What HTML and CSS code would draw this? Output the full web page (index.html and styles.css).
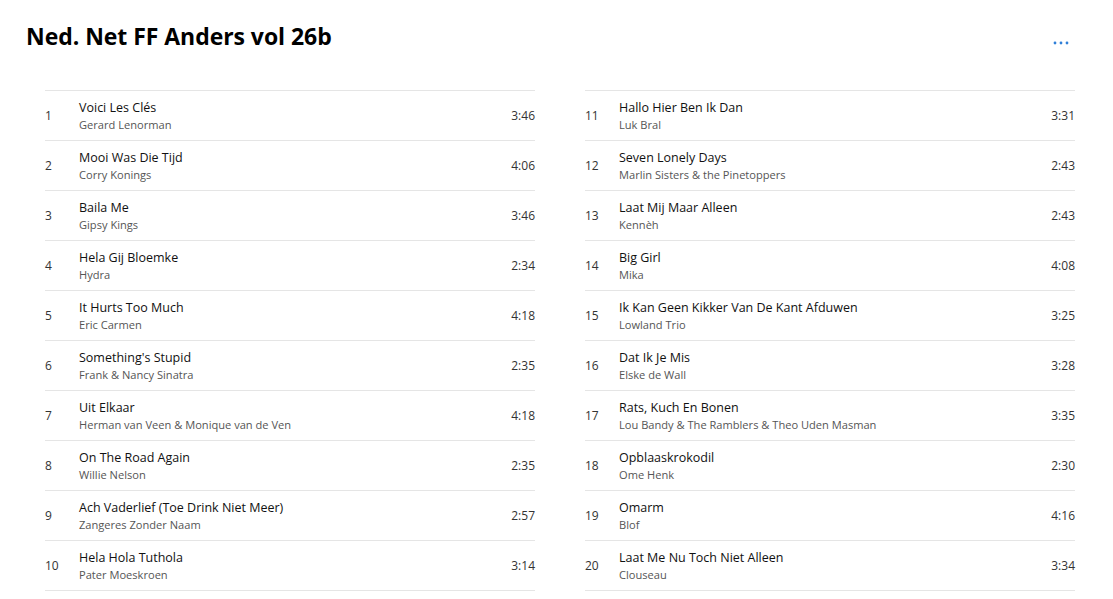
FILE: index.html
```html
<!DOCTYPE html>
<html>
<head>
<meta charset="utf-8">
<link rel="stylesheet" href="styles.css">
</head>
<body>
<div class="page">
  <header class="header">
    <h1 class="title">Ned. Net FF Anders vol 26b</h1>
    <button class="more" aria-label="More">
      <svg width="16" height="4" viewBox="0 0 16 4"><circle cx="2" cy="2" r="1.4" fill="#2f7fd8"/><circle cx="8" cy="2" r="1.4" fill="#2f7fd8"/><circle cx="14" cy="2" r="1.4" fill="#2f7fd8"/></svg>
    </button>
  </header>
  <div class="columns">
    <ol class="tracks">
      <li class="track"><span class="num">1</span><div class="info"><div class="name">Voici Les Clés</div><div class="artist">Gerard Lenorman</div></div><span class="dur">3:46</span></li>
      <li class="track"><span class="num">2</span><div class="info"><div class="name">Mooi Was Die Tijd</div><div class="artist">Corry Konings</div></div><span class="dur">4:06</span></li>
      <li class="track"><span class="num">3</span><div class="info"><div class="name">Baila Me</div><div class="artist">Gipsy Kings</div></div><span class="dur">3:46</span></li>
      <li class="track"><span class="num">4</span><div class="info"><div class="name">Hela Gij Bloemke</div><div class="artist">Hydra</div></div><span class="dur">2:34</span></li>
      <li class="track"><span class="num">5</span><div class="info"><div class="name">It Hurts Too Much</div><div class="artist">Eric Carmen</div></div><span class="dur">4:18</span></li>
      <li class="track"><span class="num">6</span><div class="info"><div class="name">Something's Stupid</div><div class="artist">Frank &amp; Nancy Sinatra</div></div><span class="dur">2:35</span></li>
      <li class="track"><span class="num">7</span><div class="info"><div class="name">Uit Elkaar</div><div class="artist">Herman van Veen &amp; Monique van de Ven</div></div><span class="dur">4:18</span></li>
      <li class="track"><span class="num">8</span><div class="info"><div class="name">On The Road Again</div><div class="artist">Willie Nelson</div></div><span class="dur">2:35</span></li>
      <li class="track"><span class="num">9</span><div class="info"><div class="name">Ach Vaderlief (Toe Drink Niet Meer)</div><div class="artist">Zangeres Zonder Naam</div></div><span class="dur">2:57</span></li>
      <li class="track"><span class="num">10</span><div class="info"><div class="name">Hela Hola Tuthola</div><div class="artist">Pater Moeskroen</div></div><span class="dur">3:14</span></li>
    </ol>
    <ol class="tracks">
      <li class="track"><span class="num">11</span><div class="info"><div class="name">Hallo Hier Ben Ik Dan</div><div class="artist">Luk Bral</div></div><span class="dur">3:31</span></li>
      <li class="track"><span class="num">12</span><div class="info"><div class="name">Seven Lonely Days</div><div class="artist">Marlin Sisters &amp; the Pinetoppers</div></div><span class="dur">2:43</span></li>
      <li class="track"><span class="num">13</span><div class="info"><div class="name">Laat Mij Maar Alleen</div><div class="artist">Kennèh</div></div><span class="dur">2:43</span></li>
      <li class="track"><span class="num">14</span><div class="info"><div class="name">Big Girl</div><div class="artist">Mika</div></div><span class="dur">4:08</span></li>
      <li class="track"><span class="num">15</span><div class="info"><div class="name">Ik Kan Geen Kikker Van De Kant Afduwen</div><div class="artist">Lowland Trio</div></div><span class="dur">3:25</span></li>
      <li class="track"><span class="num">16</span><div class="info"><div class="name">Dat Ik Je Mis</div><div class="artist">Elske de Wall</div></div><span class="dur">3:28</span></li>
      <li class="track"><span class="num">17</span><div class="info"><div class="name">Rats, Kuch En Bonen</div><div class="artist">Lou Bandy &amp; The Ramblers &amp; Theo Uden Masman</div></div><span class="dur">3:35</span></li>
      <li class="track"><span class="num">18</span><div class="info"><div class="name">Opblaaskrokodil</div><div class="artist">Ome Henk</div></div><span class="dur">2:30</span></li>
      <li class="track"><span class="num">19</span><div class="info"><div class="name">Omarm</div><div class="artist">Blof</div></div><span class="dur">4:16</span></li>
      <li class="track"><span class="num">20</span><div class="info"><div class="name">Laat Me Nu Toch Niet Alleen</div><div class="artist">Clouseau</div></div><span class="dur">3:34</span></li>
    </ol>
  </div>
</div>
</body>
</html>
```

FILE: styles.css
```css
html, body {
  margin: 0;
  padding: 0;
  background: #ffffff;
}
body {
  font-family: "Open Sans", "Noto Sans", sans-serif;
  color: #1a1a1a;
}
.page {
  width: 1113px;
  height: 599px;
  overflow: hidden;
}
.header {
  display: flex;
  justify-content: space-between;
  align-items: flex-start;
  padding: 21px 44px 0 26px;
  height: 90px;
  box-sizing: border-box;
}
.title {
  margin: 0;
  font-size: 23px;
  font-weight: 700;
  line-height: 30px;
  color: #000;
  letter-spacing: -0.05px;
}
.more {
  border: 0;
  background: none;
  padding: 0;
  margin-top: 20px;
  width: 16px;
  height: 4px;
  display: flex;
}
.columns {
  display: grid;
  grid-template-columns: 490px 490px;
  column-gap: 50px;
  padding-left: 45px;
}
.tracks {
  list-style: none;
  margin: 0;
  padding: 0;
  border-top: 1px solid #e5e5e5;
}
.track {
  display: flex;
  align-items: center;
  height: 49px;
  border-bottom: 1px solid #e5e5e5;
}
.num {
  width: 34px;
  font-size: 12px;
  color: #333;
}
.info {
  flex: 1;
  display: flex;
  flex-direction: column;
}
.name {
  font-size: 12.5px;
  line-height: 17px;
  color: #111;
}
.artist {
  font-size: 11.1px;
  line-height: 17px;
  color: #555;
}
.dur {
  font-size: 12px;
  color: #333;
}
```
